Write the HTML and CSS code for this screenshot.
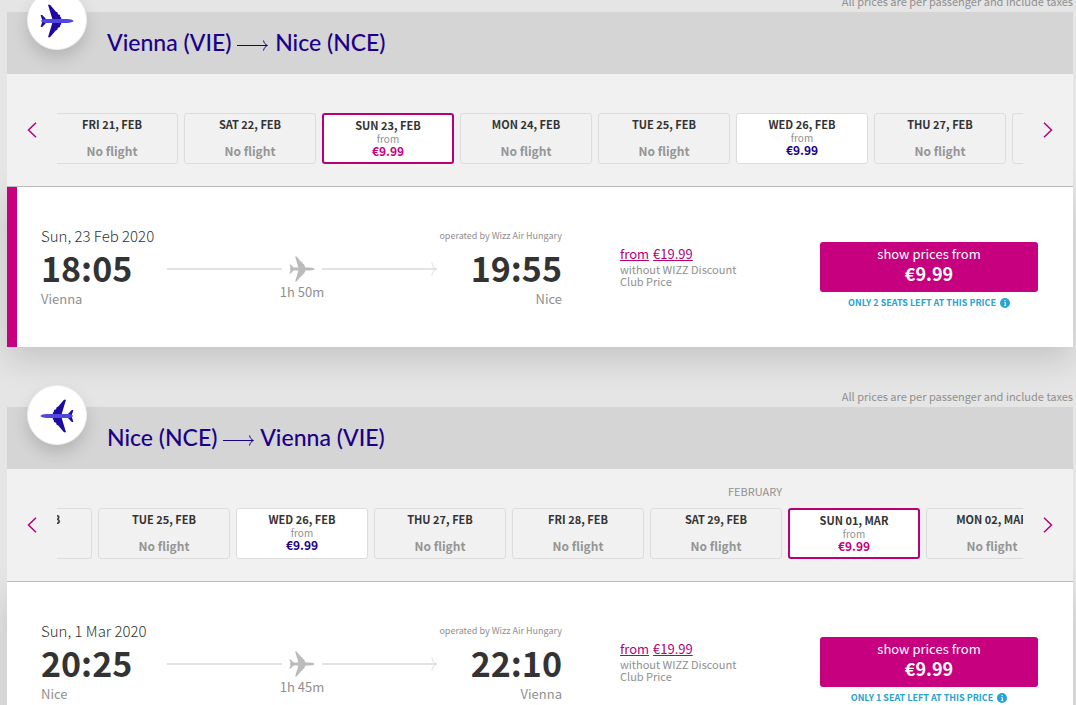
FILE: index.html
```html
<!DOCTYPE html>
<html lang="en">
<head>
  <meta charset="UTF-8">
  <meta name="viewport" content="width=device-width, initial-scale=1">
  <title>Select flights</title>
  <link rel="stylesheet" href="styles.css">
</head>
<body>
  <!-- shared icons -->
  <svg class="sprite" width="0" height="0" aria-hidden="true">
    <symbol id="plane" viewBox="0 0 34 34">
      <path d="M8 .8h2l6 6.900 1.200.3.800 2.200 2 .8.300 2 1 .8-.300 2.700h-8.500l-.200-1.500z"/>
      <path d="M8 33.200h2l6-6.900 1.200-.3.800-2.200 2-.8.300-2 1-.8-.300-2.700h-8.500l-.200 1.500z"/>
      <path d="M.6 11h1.600l3.800 4v4l-3.800 4H.6l1.600-5v-2z"/>
      <path class="hull" d="M1 17c.6-1.400 3-2 6-2h20c3.500.1 6 .9 6.700 2-.7 1.100-3.200 1.900-6.700 2H7c-3 0-5.400-.6-6-2z"/>
    </symbol>
    <symbol id="long-arrow" viewBox="0 0 32 12">
      <path d="M0 6.500h30M26.500 1.500c.5 2.500 2 4.200 4 5-2 .8-3.500 2.500-4 5" fill="none" stroke="currentColor"/>
    </symbol>
    <symbol id="info" viewBox="0 0 10 10">
      <circle cx="5" cy="5" r="5" fill="currentColor"/>
      <path d="M4.400 4.500h.9v3M4.200 7.500h2M4.500 2.600h1.200" fill="none" stroke="#fff"/>
    </symbol>
  </svg>

  <main class="page">
    <section class="flight">
      <p class="note">All prices are per passenger and include taxes</p>
      <header class="flight-header">
        <span class="badge"><svg class="badge-icon"><use href="#plane"/></svg></span>
        <h2>Vienna (VIE) <svg class="title-arrow"><use href="#long-arrow"/></svg> Nice (NCE)</h2>
      </header>
      <div class="calendar">
        <button class="nav" type="button" aria-label="Previous dates"><svg width="10" height="16" viewBox="0 0 10 16"><path d="M9 .8 1.500 8 9 15.200"/></svg></button>
        <div class="dates">
          <ul class="date-list outbound">
            <li><button class="date" type="button"><b>FRI 21, FEB</b><span class="none">No flight</span></button></li>
            <li><button class="date" type="button"><b>SAT 22, FEB</b><span class="none">No flight</span></button></li>
            <li><button class="date available selected" type="button"><b>SUN 23, FEB</b><small>from</small><span class="price">€9.99</span></button></li>
            <li><button class="date" type="button"><b>MON 24, FEB</b><span class="none">No flight</span></button></li>
            <li><button class="date" type="button"><b>TUE 25, FEB</b><span class="none">No flight</span></button></li>
            <li><button class="date available" type="button"><b>WED 26, FEB</b><small>from</small><span class="price">€9.99</span></button></li>
            <li><button class="date" type="button"><b>THU 27, FEB</b><span class="none">No flight</span></button></li>
            <li><button class="date" type="button" aria-label="Friday 28 February"></button></li>
          </ul>
        </div>
        <button class="nav" type="button" aria-label="Next dates"><svg width="10" height="16" viewBox="0 0 10 16"><path d="M1 .8 8.500 8 1 15.200"/></svg></button>
      </div>
      <div class="details active">
        <div class="trip">
          <div class="stop">
            <p class="day">Sun, 23 Feb 2020</p>
            <p class="time">18:05</p>
            <p class="city">Vienna</p>
          </div>
          <div class="route">
            <div class="track">
              <span class="line"></span>
              <svg class="track-plane"><use href="#plane"/></svg>
              <span class="line"></span>
              <svg class="track-head" viewBox="0 0 6 14"><path d="M.8.500c.6 3 2 5.300 4.200 6.500-2.200 1.200-3.600 3.500-4.200 6.500"/></svg>
            </div>
            <p class="city">1h 50m</p>
          </div>
          <div class="stop arrival">
            <p class="operator">operated by Wizz Air Hungary</p>
            <p class="time">19:55</p>
            <p class="city">Nice</p>
          </div>
        </div>
        <div class="regular">
          <a href="#"><span>from</span><span>€19.99</span></a>
          <p>without WIZZ Discount Club Price</p>
        </div>
        <div class="offer">
          <button class="show-prices" type="button">show prices from<strong>€9.99</strong></button>
          <p class="seats">ONLY 2 SEATS LEFT AT THIS PRICE <svg class="info"><use href="#info"/></svg></p>
        </div>
      </div>
    </section>

    <section class="flight">
      <p class="note">All prices are per passenger and include taxes</p>
      <header class="flight-header">
        <span class="badge"><svg class="badge-icon back"><use href="#plane"/></svg></span>
        <h2>Nice (NCE) <svg class="title-arrow"><use href="#long-arrow"/></svg> Vienna (VIE)</h2>
      </header>
      <div class="calendar">
        <button class="nav" type="button" aria-label="Previous dates"><svg width="10" height="16" viewBox="0 0 10 16"><path d="M9 .8 1.500 8 9 15.200"/></svg></button>
        <div class="dates">
          <ul class="date-list return">
            <li><button class="date" type="button"><b>MON 24, FEB</b></button></li>
            <li><button class="date" type="button"><b>TUE 25, FEB</b><span class="none">No flight</span></button></li>
            <li><button class="date available" type="button"><b>WED 26, FEB</b><small>from</small><span class="price">€9.99</span></button></li>
            <li><button class="date" type="button"><b>THU 27, FEB</b><span class="none">No flight</span></button></li>
            <li><button class="date" type="button"><b>FRI 28, FEB</b><span class="none">No flight</span></button></li>
            <li><span class="month">FEBRUARY</span><button class="date" type="button"><b>SAT 29, FEB</b><span class="none">No flight</span></button></li>
            <li><button class="date available selected" type="button"><b>SUN 01, MAR</b><small>from</small><span class="price">€9.99</span></button></li>
            <li><button class="date" type="button"><b>MON 02, MAR</b><span class="none">No flight</span></button></li>
          </ul>
        </div>
        <button class="nav" type="button" aria-label="Next dates"><svg width="10" height="16" viewBox="0 0 10 16"><path d="M1 .8 8.500 8 1 15.200"/></svg></button>
      </div>
      <div class="details">
        <div class="trip">
          <div class="stop">
            <p class="day">Sun, 1 Mar 2020</p>
            <p class="time">20:25</p>
            <p class="city">Nice</p>
          </div>
          <div class="route">
            <div class="track">
              <span class="line"></span>
              <svg class="track-plane"><use href="#plane"/></svg>
              <span class="line"></span>
              <svg class="track-head" viewBox="0 0 6 14"><path d="M.8.500c.6 3 2 5.300 4.200 6.500-2.200 1.200-3.600 3.500-4.200 6.500"/></svg>
            </div>
            <p class="city">1h 45m</p>
          </div>
          <div class="stop arrival">
            <p class="operator">operated by Wizz Air Hungary</p>
            <p class="time">22:10</p>
            <p class="city">Vienna</p>
          </div>
        </div>
        <div class="regular">
          <a href="#"><span>from</span><span>€19.99</span></a>
          <p>without WIZZ Discount Club Price</p>
        </div>
        <div class="offer">
          <button class="show-prices" type="button">show prices from<strong>€9.99</strong></button>
          <p class="seats">ONLY 1 SEAT LEFT AT THIS PRICE <svg class="info"><use href="#info"/></svg></p>
        </div>
      </div>
    </section>
  </main>
</body>
</html>
```
FILE: styles.css
```css
* {
  box-sizing: border-box;
}
html {
  overflow: hidden;
}
body {
  margin: 0;
  background: #e5e5e5;
  color: #333;
  font-family: "Noto Sans CJK SC", "Open Sans", sans-serif;
}
p, h2, ul {
  margin: 0;
  padding: 0;
}
button {
  font-family: inherit;
  cursor: pointer;
}
.sprite {
  position: absolute;
}
.page {
  padding: 0 3px 0 7px;
  margin-top: -8px;
}
.flight {
  margin-bottom: 40px;
}
.note {
  position: relative;
  z-index: 1;
  font-size: 11px;
  line-height: 18px;
  padding-bottom: 2px;
  text-align: right;
  color: #8f8f8f;
}

/* Route title */
.flight-header {
  position: relative;
  z-index: 2;
  display: flex;
  align-items: center;
  height: 62px;
  padding: 0 0 2px 100px;
  background: #d5d5d5;
}
h2 {
  font-family: Lato, sans-serif;
  font-size: 23px;
  font-weight: 500;
  line-height: 30px;
  color: #1b0088;
}
.title-arrow {
  width: 32px;
  height: 12px;
}
.badge {
  position: absolute;
  left: 20px;
  top: -22px;
  display: flex;
  align-items: center;
  justify-content: center;
  width: 60px;
  height: 60px;
  padding-top: 2px;
  border-radius: 50%;
  background: #fff;
  border: 1px solid #eee;
  box-shadow: 0 8px 16px rgba(0, 0, 0, 0.15);
}
.badge-icon {
  width: 34px;
  height: 34px;
  fill: #1f0aa0;
  --hull: #5048dc;
}
.back {
  transform: scaleX(-1);
}
.hull {
  fill: var(--hull);
}

/* Date strip */
.calendar {
  position: relative;
  z-index: 1;
  display: grid;
  grid-template-columns: 50px minmax(0, 1fr) 50px;
  align-items: center;
  background: #f1f1f1;
  border-bottom: 1px solid #bbb;
}
.nav {
  display: flex;
  align-items: center;
  justify-content: center;
  height: 50px;
  padding: 0;
  border: 0;
  background: none;
}
.nav path {
  fill: none;
  stroke: #b5007a;
  stroke-width: 1.5;
}
.dates {
  overflow: hidden;
  padding: 13px 0 22px;
}
.date-list {
  display: flex;
  gap: 6px;
  list-style: none;
}
/* scroll position of each strip */
.outbound {
  margin-left: -11px;
}
.return {
  margin-left: -97px;
}
.date-list li {
  flex: none;
  display: flex;
  flex-direction: column;
  justify-content: flex-end;
  width: 132px;
  height: 77px;
}
.month {
  flex: 1;
  font-size: 11px;
  line-height: 18px;
  text-align: right;
  color: #8f8f8f;
}
.date {
  display: flex;
  flex-direction: column;
  align-items: center;
  height: 51px;
  padding: 3px 0 0;
  border: 1px solid #ddd;
  border-radius: 3px;
  background: none;
  color: #333;
}
.date b {
  font-size: 11px;
  line-height: 15px;
}
.date small {
  font-size: 10px;
  line-height: 11px;
  color: #8f8f8f;
}
.price, .none {
  font-size: 12px;
  font-weight: 700;
  line-height: 14px;
}
.price {
  color: #1b0088;
}
.none {
  margin-top: 12px;
  color: #959595;
}
.available {
  background: #fff;
}
.selected {
  border: 2px solid #b5007a;
}
.selected .price {
  color: #c6007e;
}

/* Flight details */
.details {
  display: grid;
  grid-template-columns: minmax(0, 1fr) 200px 218px;
  height: 160px;
  padding: 0 35px 0 24px;
  border-left: 10px solid #fff;
  background: #fff;
  box-shadow: 0 12px 32px rgba(0, 0, 0, 0.15);
}
.active {
  border-left-color: #c6007e;
}
.trip {
  display: grid;
  grid-template-columns: 126px minmax(0, 1fr) 125px;
  margin-right: 58px;
  padding-top: 39px;
}
.stop {
  white-space: nowrap;
}
.arrival {
  text-align: right;
}
.day, .operator {
  height: 20px;
  line-height: 20px;
}
.day {
  font-size: 15px;
  font-weight: 300;
}
.operator {
  font-size: 9px;
  color: #8f8f8f;
}
.time {
  font-size: 34px;
  font-weight: 700;
  line-height: 43px;
}
.city {
  font-size: 13px;
  line-height: 20px;
  color: #8f8f8f;
}
.route {
  padding-top: 30px;
  text-align: center;
}
.track {
  display: flex;
  align-items: center;
  height: 26px;
}
.line {
  flex: 1;
  height: 2px;
  background: #e3e3e3;
}
.track-plane {
  width: 26px;
  height: 26px;
  margin: 0 7px;
  fill: #bbb;
  --hull: #bbb;
}
.track-head {
  width: 6px;
  height: 14px;
  margin-left: -6px;
  fill: none;
  stroke: #ddd;
}
.regular {
  padding-top: 57px;
  font-size: 11px;
  line-height: 12px;
  color: #8f8f8f;
}
.regular a {
  display: flex;
  gap: 4px;
  font-size: 13px;
  line-height: 19px;
  color: #b5007a;
}
.regular p {
  max-width: 130px;
}
.offer {
  padding-top: 55px;
}
.show-prices {
  display: flex;
  flex-direction: column;
  align-items: center;
  width: 100%;
  height: 50px;
  padding: 3px 0 0;
  border: 0;
  border-radius: 3px;
  background: #c6007e;
  color: #fff;
  font-size: 13px;
  line-height: 18px;
}
.show-prices strong {
  font-size: 18px;
  line-height: 20px;
}
.seats {
  display: flex;
  align-items: center;
  justify-content: center;
  gap: 4px;
  font-size: 9px;
  font-weight: 700;
  line-height: 21px;
  color: #27a3d4;
}
.info {
  width: 10px;
  height: 10px;
}
```
